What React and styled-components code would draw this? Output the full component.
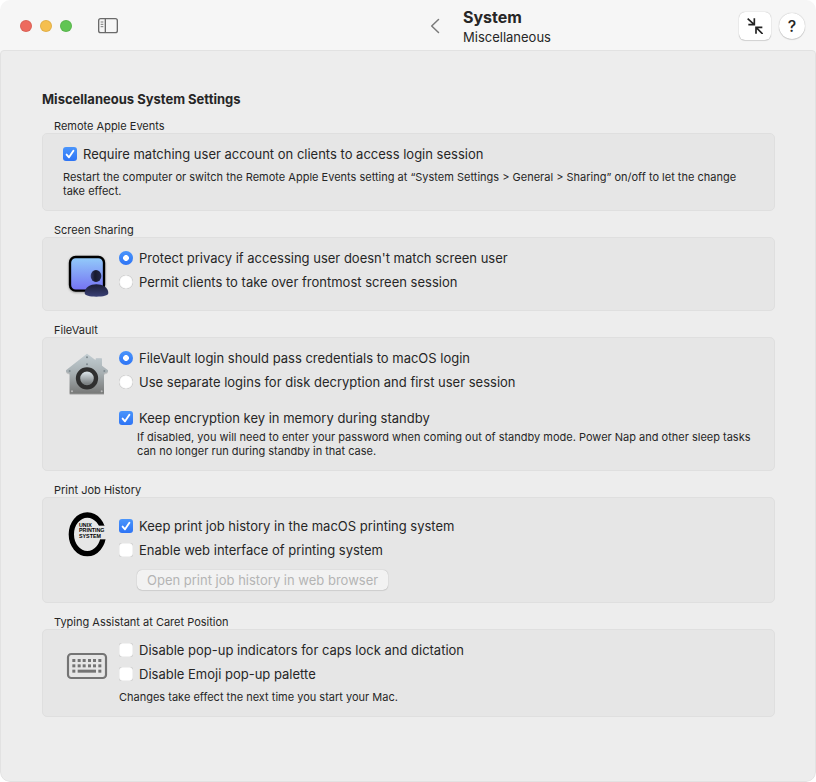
import { useState } from 'react';
import styled, { createGlobalStyle } from 'styled-components';

const tick = "url(\"data:image/svg+xml,%3Csvg xmlns='http://www.w3.org/2000/svg' viewBox='0 0 14 14'%3E%3Cpath d='M3.6 7.6 L6 10.3 L10.4 3.8' fill='none' stroke='white' stroke-width='1.9' stroke-linecap='round' stroke-linejoin='round'/%3E%3C/svg%3E\")";

const SidebarIcon = () => (
  <svg width="20" height="16" viewBox="0 0 60 48" fill="none" stroke="#6a6a6a">
    <rect x="2" y="2" width="56" height="42" rx="6" strokeWidth="4" />
    <path d="M22 2V44" strokeWidth="4" />
    <path d="M8 12H16M8 19H16M8 26H16" strokeWidth="2.6" />
  </svg>
)

const BackIcon = () => (
  <svg width="10" height="16" viewBox="0 0 10 16" fill="none" stroke="#7a7a7a" strokeWidth="1.5" strokeLinecap="round" strokeLinejoin="round">
    <path d="M8.5 1.5L1.7 8L8.5 14.5" />
  </svg>
)

const ShrinkIcon = () => (
  <svg width="16" height="16" viewBox="0 0 48 48" fill="none" stroke="#222" strokeWidth="5">
    <path d="M2 2L21 19M22 1V20H4" />
    <path d="M47 48L28 29M27 47V28H46" />
  </svg>
)

const ScreenSharingIcon = () => (
  <svg width="48" height="48" viewBox="0 0 144 144">
    <defs>
      <linearGradient id="screen" x1="0" y1="0" x2="0" y2="1">
        <stop offset="0" stopColor="#93cdfa" />
        <stop offset="1" stopColor="#7470f3" />
      </linearGradient>
      <linearGradient id="head" x1="0" y1="0" x2="1" y2="0">
        <stop offset="0" stopColor="#343a70" />
        <stop offset="0.4" stopColor="#181a2c" />
        <stop offset="1" stopColor="#23284a" />
      </linearGradient>
      <linearGradient id="body" x1="0" y1="0" x2="0" y2="1">
        <stop offset="0" stopColor="#1c1f38" />
        <stop offset="1" stopColor="#3a4076" />
      </linearGradient>
      <filter id="screenShadow" x="-20%" y="-20%" width="140%" height="140%">
        <feDropShadow dx="0" dy="2" stdDeviation="3" floodOpacity="0.4" />
      </filter>
    </defs>
    <rect x="21" y="21" width="102" height="101" rx="17" fill="url(#screen)" stroke="#000" strokeWidth="7" filter="url(#screenShadow)" />
    <ellipse cx="99" cy="78" rx="16" ry="18" fill="url(#head)" />
    <path d="M65 129C65 112 82 103 100 103S136 112 136 129C136 137 120 140 100 140S65 137 65 129Z" fill="url(#body)" />
  </svg>
)

const FileVaultIcon = () => (
  <svg width="48" height="48" viewBox="0 0 144 144">
    <defs>
      <linearGradient id="house" x1="0" y1="0" x2="0" y2="1">
        <stop offset="0" stopColor="#c3ced3" />
        <stop offset="0.5" stopColor="#a6aeb1" />
        <stop offset="1" stopColor="#777877" />
      </linearGradient>
      <linearGradient id="knob" x1="0" y1="0" x2="0" y2="1">
        <stop offset="0.2" stopColor="#d3dce0" />
        <stop offset="0.8" stopColor="#7b8082" />
      </linearGradient>
      <filter id="houseShadow" x="-20%" y="-20%" width="140%" height="140%">
        <feDropShadow dx="0" dy="2" stdDeviation="2" floodOpacity="0.3" />
      </filter>
    </defs>
    <path d="M72 11L98 31V27Q98 25 100 25H115Q117 25 117 27V47L135 61Q136 64 133 67L123 71V131H20V71L11 67Q8 64 9 61Z" fill="url(#house)" filter="url(#houseShadow)" />
    <circle cx="72" cy="85" r="27" fill="url(#knob)" stroke="#2f2f2f" strokeWidth="13" />
    <g fill="#7f8a8f">
      <circle cx="72" cy="22" r="3" />
      <circle cx="72" cy="43" r="3" />
      <circle cx="20" cy="63" r="3" />
      <circle cx="124" cy="63" r="3" />
      <circle cx="27" cy="124" r="3" fill="#bbb" />
      <circle cx="116" cy="124" r="3" fill="#bbb" />
    </g>
  </svg>
)

const CupsIcon = () => (
  <svg width="48" height="48" viewBox="0 0 144 144">
    <defs>
      <mask id="opening">
        <rect width="144" height="144" fill="#fff" />
        <rect x="72" y="47" width="72" height="41" fill="#000" />
      </mask>
    </defs>
    <ellipse cx="73" cy="73" rx="48" ry="58" fill="none" stroke="#000" strokeWidth="16" mask="url(#opening)" />
    <g fontFamily="Liberation Sans, sans-serif" fontWeight="700" fontSize="16">
      <text x="48" y="50">UNIX</text>
      <text x="48" y="66">PRINTING</text>
      <text x="48" y="83">SYSTEM</text>
    </g>
  </svg>
)

const KeyboardIcon = () => (
  <svg width="48" height="48" viewBox="0 0 144 144" fill="#747474">
    <rect x="15" y="36" width="114" height="72" rx="10" fill="none" stroke="#747474" strokeWidth="6.5" />
    {[28, 44, 59, 75, 90, 106].map(x => <rect key={x} x={x} y="51" width="9" height="9" />)}
    {[28, 44, 59, 75, 90, 106].map(x => <rect key={x} x={x} y="67" width="9" height="9" />)}
    <rect x="28" y="83" width="9" height="9" />
    <rect x="44" y="83" width="55" height="9" />
    <rect x="106" y="83" width="9" height="9" />
  </svg>
)

const CheckRow = ({ label, on = false, spaced }) => {
  const [checked, setChecked] = useState(on)
  return (
    <Row $spaced={spaced}>
      <Check type="checkbox" checked={checked} onChange={() => setChecked(!checked)} />
      {label}
    </Row>
  )
}

const RadioRows = ({ name, options }) => {
  const [selected, setSelected] = useState(0)
  return options.map((option, i) => (
    <Row key={option}>
      <Radio type="radio" name={name} checked={selected === i} onChange={() => setSelected(i)} />
      {option}
    </Row>
  ))
}

const Group = ({ title, icon, tall, children }) => (
  <Section>
    <GroupTitle>{title}</GroupTitle>
    <Box>
      {icon && <IconCell>{icon}</IconCell>}
      <Controls $tall={tall}>{children}</Controls>
    </Box>
  </Section>
)

const App = () => (
  <>
    <GlobalStyle />
    <Window>
      <Toolbar>
        <ToolbarHalf>
          <Lights>
            <Light $color="#ed6a5e" aria-label="Close" />
            <Light $color="#f5bf4f" aria-label="Minimize" />
            <Light $color="#61c554" aria-label="Zoom" />
          </Lights>
          <PlainButton aria-label="Toggle sidebar"><SidebarIcon /></PlainButton>
        </ToolbarHalf>
        <ToolbarHalf>
          <BackButton aria-label="Back"><BackIcon /></BackButton>
          <Titles>
            <Title>System</Title>
            <Subtitle>Miscellaneous</Subtitle>
          </Titles>
          <ShrinkButton aria-label="Shrink window"><ShrinkIcon /></ShrinkButton>
          <HelpButton aria-label="Help">?</HelpButton>
        </ToolbarHalf>
      </Toolbar>
      <Content>
        <Heading>Miscellaneous System Settings</Heading>
        <Group title="Remote Apple Events">
          <CheckRow on label="Require matching user account on clients to access login session" />
          <Note $gap>
            Restart the computer or switch the Remote Apple Events setting at “System Settings &gt; General &gt; Sharing” on/off to let the change take effect.
          </Note>
        </Group>
        <Group title="Screen Sharing" icon={<ScreenSharingIcon />}>
          <RadioRows
            name="sharing"
            options={[
              "Protect privacy if accessing user doesn't match screen user",
              'Permit clients to take over frontmost screen session',
            ]}
          />
        </Group>
        <Group title="FileVault" icon={<FileVaultIcon />}>
          <RadioRows
            name="filevault"
            options={[
              'FileVault login should pass credentials to macOS login',
              'Use separate logins for disk decryption and first user session',
            ]}
          />
          <CheckRow on spaced label="Keep encryption key in memory during standby" />
          <Note $indent>
            If disabled, you will need to enter your password when coming out of standby mode. Power Nap and other sleep tasks can no longer run during standby in that case.
          </Note>
        </Group>
        <Group title="Print Job History" icon={<CupsIcon />} tall>
          <CheckRow on label="Keep print job history in the macOS printing system" />
          <CheckRow label="Enable web interface of printing system" />
          <PushButton disabled>Open print job history in web browser</PushButton>
        </Group>
        <Group title="Typing Assistant at Caret Position" icon={<KeyboardIcon />}>
          <CheckRow label="Disable pop-up indicators for caps lock and dictation" />
          <CheckRow label="Disable Emoji pop-up palette" />
          <Note $gap>Changes take effect the next time you start your Mac.</Note>
        </Group>
      </Content>
    </Window>
  </>
)

const GlobalStyle = createGlobalStyle`
  *{
    box-sizing: border-box;
  }
  body{
    margin: 0;
    background: #fff;
    color: #262626;
    font-family: Inter, "Liberation Sans", sans-serif;
    font-size: 13px;
    line-height: 16px;
  }
  button{
    font: inherit;
    color: inherit;
    border: 0;
    padding: 0;
  }
  svg{
    display: block;
  }
`
const Window = styled.main`
  display: flex;
  flex-direction: column;
  min-height: 100vh;
  border-radius: 10px;
  background: #f6f6f6;
  overflow: hidden;
`
const Toolbar = styled.header`
  display: grid;
  grid-template-columns: 1fr 1fr;
  height: 50px;
`
const ToolbarHalf = styled.div`
  display: flex;
  align-items: center;
  padding: 2px 11px 0 20px;
`
const Lights = styled.div`
  display: flex;
  gap: 8px;
  margin-right: 26px;
`
const Light = styled.button`
  width: 12px;
  height: 12px;
  border-radius: 50%;
  background: ${p => p.$color};
  box-shadow: inset 0 0 0 1px rgba(0, 0, 0, 0.08);
`
const PlainButton = styled.button`
  background: none;
`
const BackButton = styled(PlainButton)`
  padding: 0 2px;
  margin-right: 21px;
`
const Titles = styled.div`
  flex: 1;
  padding-top: 2px;
`
const Title = styled.h1`
  margin: 0;
  font-size: 16px;
  line-height: 20px;
  font-weight: 700;
`
const Subtitle = styled.div`
  line-height: 20px;
`
const ShrinkButton = styled.button`
  display: grid;
  place-items: center;
  width: 32px;
  height: 28px;
  margin-right: 8px;
  border-radius: 6px;
  background: #fff;
  box-shadow: 0 0 1px rgba(0, 0, 0, 0.35), 0 1px 1px rgba(0, 0, 0, 0.12);
`
const HelpButton = styled.button`
  width: 26px;
  height: 26px;
  border-radius: 50%;
  background: #fff;
  font-size: 16px;
  font-weight: 500;
  box-shadow: 0 0 1px rgba(0, 0, 0, 0.35), 0 1px 1px rgba(0, 0, 0, 0.12);
`
const Content = styled.div`
  flex: 1;
  display: flex;
  flex-direction: column;
  gap: 12px;
  padding: 40px 40px 64px 41px;
  border: 1px solid #e2e2e2;
  border-radius: 4px 4px 10px 10px;
  background: #ededed;
`
const Heading = styled.h2`
  margin: 0;
  font-size: 13px;
  font-weight: 700;
`
const Section = styled.section`
  display: flex;
  flex-direction: column;
`
const GroupTitle = styled.h3`
  margin: 0 12px;
  font-size: 11px;
  line-height: 14px;
  font-weight: 400;
`
const Box = styled.div`
  display: flex;
  gap: 8px;
  padding: 8px 20px 12px;
  border: 1px solid #dfdfdf;
  border-radius: 5px;
  background: #e6e6e6;
`
const IconCell = styled.div`
  flex: none;
  margin-top: 4px;
`
const Controls = styled.div`
  flex: 1;
  display: flex;
  flex-direction: column;
  align-items: flex-start;
  padding-top: ${p => p.$tall ? '8px' : '0'};
`
const Row = styled.label`
  display: flex;
  align-items: center;
  gap: 6px;
  min-height: 24px;
  margin-top: ${p => p.$spaced ? '12px' : '0'};
`
const Check = styled.input`
  appearance: none;
  flex: none;
  width: 14px;
  height: 14px;
  margin: 0;
  border-radius: 3px;
  background: #fff;
  box-shadow: inset 0 0 1px rgba(0, 0, 0, 0.5);
  &:checked{
    background: ${tick}, linear-gradient(#4a95fb, #2e74f5);
    box-shadow: none;
  }
`
const Radio = styled.input`
  appearance: none;
  flex: none;
  width: 14px;
  height: 14px;
  margin: 0;
  border-radius: 50%;
  background: #fff;
  box-shadow: inset 0 0 1px rgba(0, 0, 0, 0.5);
  &:checked{
    background: radial-gradient(circle, #fff 0 2.6px, transparent 3.2px), linear-gradient(#4a95fb, #2e74f5);
    box-shadow: none;
  }
`
const Note = styled.p`
  margin: ${p => p.$gap ? '4px' : '0'} 0 0 ${p => p.$indent ? '18px' : '0'};
  font-size: 11px;
  line-height: 14px;
`
const PushButton = styled.button`
  height: 20px;
  margin: 8px 0 0 18px;
  padding: 0 10px;
  border-radius: 5px;
  background: #f2f2f2;
  box-shadow: 0 0 1px rgba(0, 0, 0, 0.3), 0 1px 1px rgba(0, 0, 0, 0.08);
  &:disabled{
    color: #b4b4b4;
  }
`

export default App
